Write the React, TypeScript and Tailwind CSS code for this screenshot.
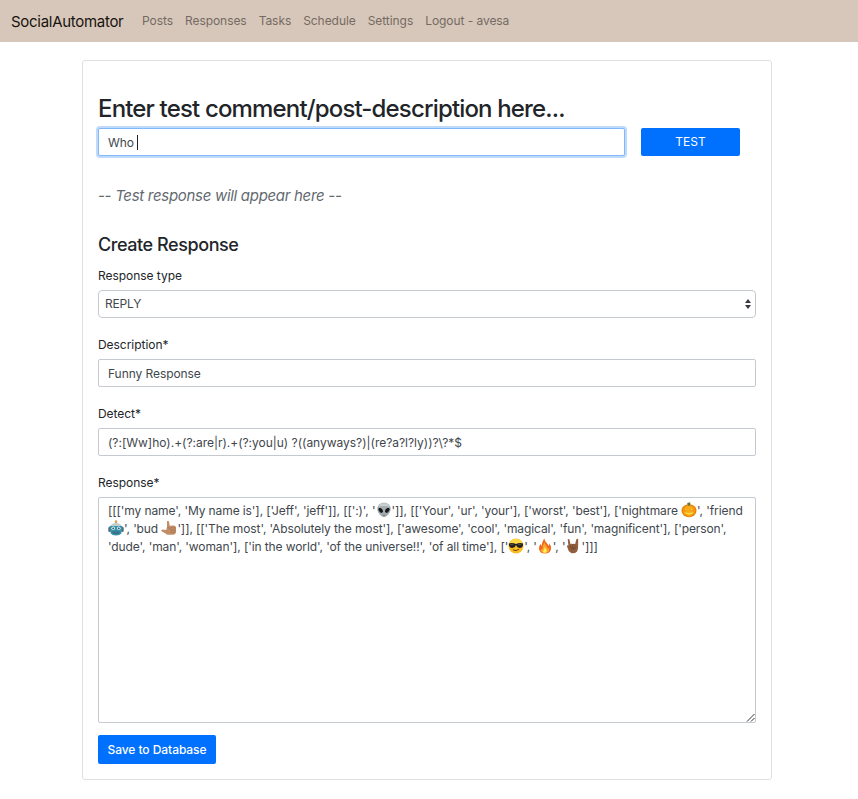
import React from "react";

function Emoji({ label, children }: { label: string; children: React.ReactNode }) {
  return (
    <svg role="img" aria-label={label} viewBox="0 0 16 16" className="inline-block h-4 w-4 align-[-3px]">
      {children}
    </svg>
  );
}

const Alien = () => (
  <Emoji label="alien">
    <path d="M8 .8C4 .8 1.300 3.500 1.300 7c0 4 4.700 8.300 6.700 8.300S14.700 11 14.700 7C14.700 3.500 12 .8 8 .8Z" fill="#a5adb0" />
    <path d="M8 1.300C5 1.300 3 3 2.600 5c2-1.500 8.800-1.500 10.800 0-.4-2-2.400-3.700-5.400-3.700Z" fill="#c9d0d0" />
    <ellipse cx="4.700" cy="8.300" rx="1.800" ry="2.800" transform="rotate(-35 4.700 8.300)" fill="#17191c" />
    <ellipse cx="11.300" cy="8.300" rx="1.800" ry="2.800" transform="rotate(35 11.300 8.300)" fill="#17191c" />
    <path d="M6.600 13q1.400.7 2.800 0" stroke="#555d60" strokeWidth=".7" fill="none" />
  </Emoji>
);

const Pumpkin = () => (
  <Emoji label="pumpkin">
    <ellipse cx="8" cy="8.700" rx="7.500" ry="6.500" fill="#e87f08" />
    <ellipse cx="8" cy="8.700" rx="6.300" ry="5.500" fill="#f79a12" />
    <ellipse cx="8" cy="8.700" rx="3.500" ry="5.800" fill="#fbaa1c" />
    <path d="M6.800 3.800 6.200 1 9.200.3 9.300 3.800Z" fill="#6b7832" />
    <path d="m3.500 7.800 1.300-2 1.600 2Zm6 0L11 5.800l1.400 2ZM3 9.800q2 .8 3 .3l1 .8 1-.8 1 .8 1-.8q1 .4 3-.3-1 3-5 3t-5-3Z" fill="#ffdf3a" stroke="#d98310" strokeWidth=".3" />
  </Emoji>
);

const Robot = () => (
  <Emoji label="robot">
    <path d="M7.500 1h1v4h-1Z" fill="#795b52" />
    <circle cx="8" cy="1.500" r="1.300" fill="#e7a243" />
    <path d="M2 6.500Q3.500 3 8 3t6 3.500Z" fill="#c3cdca" />
    <rect x=".3" y="7" width="2.500" height="5" rx="1" fill="#536b75" />
    <rect x="13.200" y="7" width="2.500" height="5" rx="1" fill="#536b75" />
    <path d="M1.500 6h13l-1.200 7.500Q12 15.500 8 15.500t-5.300-2Z" fill="#3791ad" />
    <circle cx="5.200" cy="8.300" r="1.800" fill="#d8f3f2" />
    <circle cx="10.800" cy="8.300" r="1.800" fill="#d8f3f2" />
    <circle cx="5.200" cy="8.300" r=".9" fill="#234c59" />
    <circle cx="10.800" cy="8.300" r=".9" fill="#234c59" />
    <path d="M4.500 11.500h7l-.7 2.300H5.200Z" fill="#205467" />
    <path d="M6 11.500v2m2-2v2m2-2v2" stroke="#a4d0dc" strokeWidth=".5" />
  </Emoji>
);

const CallMe = () => (
  <Emoji label="call me hand">
    <path d="M6 1.200q1.400-1.100 2 .5l.7 4 4.300-.2q2 .2 2 2.200v4.100q0 2.600-2.600 2.900H7.200q-1.800 0-3-1.500L.8 11.500Q-.2 10 1.300 9.500l3.900.6.8-3.300Z" fill="#c28e67" />
    <path d="M10 7.900h4.600M9.600 10h5.100M9.600 12.200h4.600M6.700 7.500q2-.5 2.200 1.500" stroke="#9f6d4e" strokeWidth=".6" fill="none" strokeLinecap="round" />
  </Emoji>
);

const Cool = () => (
  <Emoji label="sunglasses">
    <circle cx="8" cy="8" r="7.500" fill="#f9bd22" />
    <ellipse cx="8" cy="4" rx="5.500" ry="3" fill="#ffda45" />
    <path d="M.8 5.500q3.700-1 7.200.4 3.500-1.400 7.200-.4-.1 4.500-3.700 4.500Q9 10 8.200 7.200h-.4Q7 10 4.500 10 .900 10 .8 5.500Z" fill="#24221e" />
    <path d="M2.200 6.600h3.200M10 6.600h3.200" stroke="#77746a" strokeWidth=".6" />
    <path d="M5.200 12q3 1.700 5.600-.5" stroke="#754319" strokeWidth="1" fill="none" strokeLinecap="round" />
  </Emoji>
);

const Fire = () => (
  <Emoji label="fire">
    <path d="M7.200.5q.6 2.500 2.300 4.300Q11.200 6.600 11.400 8q1.200-1 .9-2.700Q14.500 8 14 11q-.9 4.500-6 4.500T2 11q-.4-3 1.700-5.300 0 1.500.9 2.300Q5 3.800 7.200.5Z" fill="#ef651c" />
    <path d="M7.600 4q.2 2.200 1.800 4t1.400 3q1-.4 1.400-1.600.6 5.600-4.200 5.600-4.600-.1-4.400-4.400.8 1.300 1.700 1.200Q5.200 8 7.600 4Z" fill="#fca82e" />
    <path d="M8 9q.2 1.500 1.400 2.600 1 3-1.500 3.400-2.400-.3-2-2.700l.9.400Q6.900 10.800 8 9Z" fill="#fff05a" />
  </Emoji>
);

const Horns = () => (
  <Emoji label="horns hand">
    <path d="M2.700 1.300q1.200-1 1.800.4l1 4.600h4.600l1.300-5q1-1.100 1.800.1l-.1 7.500q.2 5.600-4.700 6.300-3.400 0-4.900-2.800L1.900 8q.4-1 1.500-.7Z" fill="#92603e" />
    <path d="M5.700 6.500q1.100-1 2 0v4h-2Zm2.300 0q1.100-1 2 0v4H8ZM4.200 8.900q3 .2 6 1.200-1.700 1.500-4.400 1.100" stroke="#70432a" strokeWidth=".5" fill="#9e6943" />
  </Emoji>
);

const field =
  "block h-7 w-full rounded-[2px] border border-[#c5cad1] bg-white px-[9px] text-[12px] text-[#41474d] outline-none";

function Label({ children }: { children: React.ReactNode }) {
  return <div className="mb-[5px] h-[18px] text-[12px] leading-[18px] tracking-[-0.04px]">{children}</div>;
}

const links = ["Posts", "Responses", "Tasks", "Schedule", "Settings", "Logout - avesa"];

export default function App() {
  return (
    <div className="min-h-[799px] bg-white font-['Inter',sans-serif] text-[#212529]">
      <nav className="flex h-[42px] items-center bg-[#d7c7ba] pl-[11px]">
        <div className="w-[131px] pt-px text-[15px] leading-5 tracking-[-0.29px] text-[#17130f]">SocialAutomator</div>
        <div className="flex gap-3 pb-px text-[12px] leading-[18px] tracking-[-0.06px] text-[#746a63]">
          {links.map((link) => (
            <a key={link} className="whitespace-nowrap">{link}</a>
          ))}
        </div>
      </nav>
      <main className="mt-[18px] ml-[82px] h-[720px] w-[690px] rounded-[3px] border border-[#dfdfdf] px-[15px] pt-[33px]">
        <h1 className="h-[34px] whitespace-nowrap text-[24px] leading-[30px] font-medium tracking-[-0.84px]">
          Enter test comment/post-description here...
        </h1>
        <div className="flex gap-4">
          <div className="flex h-7 w-[527px] items-center rounded-[2px] border border-[#80b8fa] bg-white px-[9px] pt-px text-[12px] tracking-[-0.1px] text-[#41474d] shadow-[0_0_0_2px_#bfdafc]">
            Who<span className="ml-[3px] h-[15px] w-px bg-[#222]" />
          </div>
          <button className="h-7 w-[99px] rounded-[2px] bg-[#0070ff] text-[12px] text-white">TEST</button>
        </div>
        <p className="mt-[30px] h-5 text-[15px] leading-5 tracking-[-0.3px] text-[#636a70] italic">-- Test response will appear here --</p>
        <h2 className="mt-7 h-[22px] text-[18px] leading-[22px] font-medium tracking-[-0.43px]">Create Response</h2>
        <form className="mt-[11px]">
          <div className="h-[69px]">
            <Label>Response type</Label>
            <div className="flex h-7 items-center justify-between rounded-[4px] border border-[#c5cad1] pr-1 pl-[6px] text-[12px] tracking-[-0.2px] text-[#41474d]">
              REPLY
              <svg width="6" height="12" viewBox="0 0 6 12" fill="#343a40"><path d="M0 5 3 1l3 4ZM0 7h6l-3 4Z" /></svg>
            </div>
          </div>
          <div className="h-[69px]">
            <Label>Description*</Label>
            <input className={`${field} tracking-[-0.07px]`} defaultValue="Funny Response" />
          </div>
          <div className="h-[69px]">
            <Label>Detect*</Label>
            <input className={`${field} tracking-[-0.02px]`} defaultValue="(?:[Ww]ho).+(?:are|r).+(?:you|u) ?((anyways?)|(re?a?l?ly))?\?*$" />
          </div>
          <Label>Response*</Label>
          <div className="flex h-[226px] flex-col rounded-[2px] border border-[#c5cad1] pt-1 pl-[9px] text-[12px] leading-[18px] whitespace-nowrap text-[#41474d]">
            <div className="h-[18px] tracking-[-0.1px]">
              [[['my name', 'My name is'], ['Jeff', 'jeff']], [[':)', '<Alien />']], [['Your', 'ur', 'your'], ['worst', 'best'], ['nightmare <Pumpkin />', 'friend
            </div>
            <div className="h-[18px] tracking-[-0.105px]">
              <Robot />', 'bud <CallMe />']], [['The most', 'Absolutely the most'], ['awesome', 'cool', 'magical', 'fun', 'magnificent'], ['person',
            </div>
            <div className="h-[18px] tracking-[-0.1px]">
              'dude', 'man', 'woman'], ['in the world', 'of the universe!!', 'of all time'], ['<Cool />', '<Fire />', '<Horns />']]]
            </div>
            <svg className="mt-auto ml-auto" width="9" height="9" viewBox="0 0 9 9" stroke="#333" strokeWidth="1"><path d="M1 8.500 8.500 1M5 8.500 8.500 5" /></svg>
          </div>
          <button type="button" className="mt-3 block h-[29px] w-[118px] rounded-[2px] bg-[#0070ff] text-[12px] font-medium tracking-[-0.06px] whitespace-nowrap text-white">
            Save to Database
          </button>
        </form>
      </main>
    </div>
  );
}
